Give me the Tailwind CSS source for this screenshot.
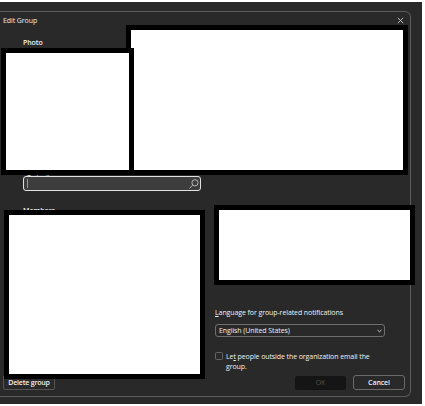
<!DOCTYPE html>
<html lang="en">
<head>
  <meta charset="UTF-8">
  <title>Edit Group</title>
  <script src="https://cdn.jsdelivr.net/npm/@tailwindcss/browser@4"></script>
</head>
<body class="bg-white font-['Open_Sans','Noto_Sans',sans-serif] text-[7px] leading-[10px] tracking-[-0.09px] text-[#f0f0f0]">

<div class="relative w-[425px] h-[406px] pt-[2px] overflow-hidden">
  <div class="w-[422px] h-[402px] bg-[#292929] pt-[9px]">

    <!-- Dialog -->
    <div class="w-[411px] h-[386px] border-t border-r border-b border-[#5c5c5c] rounded-r-[6px] flex flex-col">

      <!-- Title bar -->
      <header class="flex justify-between items-start h-[26px] pt-[4px] pl-[3px] pr-[6px]">
        <h1>Edit Group</h1>
        <button class="mt-[1px]" aria-label="Close">
          <svg width="7" height="7" viewBox="0 0 7 7" fill="none" stroke="#d0d0d0" stroke-width="0.9"><path d="M.8.8l5.4 5.4M6.2.8L.8 6.2"/></svg>
        </button>
      </header>

      <main class="flex h-[337px]">
        <!-- Left column -->
        <section class="w-[215px] pl-[23px]">
          <h2 class="font-semibold">Photo</h2>
          <label class="block mt-[125px] h-[3px] pl-[4px] font-medium">To invite</label>
          <div class="relative w-[178px] h-[15px] bg-[#3d3d3d] border-[1.5px] border-[#e2e2e2] rounded-[3px] flex items-center justify-between pl-[3px] pr-[1px]">
            <span class="w-px h-[9px] bg-[#989898]"></span>
            <svg width="10" height="10" viewBox="0 0 10 10" fill="none" stroke="#c0c0c0" stroke-width="0.9"><circle cx="6" cy="3.8" r="3.1"/><path d="M3.8 6L.4 9.4"/></svg>
          </div>
          <h2 class="mt-[15px] font-semibold tracking-normal">Members</h2>
        </section>

        <!-- Right column -->
        <section class="w-[190px] pt-[270px]">
          <label class="block"><u>L</u>anguage for group-related notifications</label>
          <div class="mt-[6px] w-[170px] h-[13px] border border-[#6e6e6e] rounded-[3px] flex items-center justify-between pl-[3px] pr-[2px]">
            <span>English (United States)</span>
            <svg width="5" height="4" viewBox="0 0 5 4" fill="none" stroke="#d8d8d8" stroke-width="0.9"><path d="M.5 1l2 1.8L4.5 1"/></svg>
          </div>
          <div class="flex gap-[3px] mt-[15px]">
            <span class="w-[8px] h-[8px] border border-[#666] rounded-[1.5px]"></span>
            <p class="w-[150px]">Le<u>t</u> people outside the organization email the group.</p>
          </div>
        </section>
      </main>

      <!-- Buttons -->
      <footer class="flex items-center h-[15px] pl-[3px] font-medium">
        <button class="w-[52px] h-[15px] pt-px border border-[#555] rounded-[2px] font-semibold tracking-[-0.2px]">Delete <u>g</u>roup</button>
        <button class="w-[51px] h-[14px] pt-px ml-auto bg-[#151515] text-[#505050] rounded-[2px] font-normal">OK</button>
        <button class="w-[52px] h-[15px] pt-px ml-[7px] mr-[5px] border border-[#6a6a6a] rounded-[3px] font-semibold">Cancel</button>
      </footer>
    </div>
  </div>

  <!-- Blank panels covering the form -->
  <div class="absolute left-[126px] top-[25px] w-[282px] h-[150px] bg-white border-[5px] border-black"></div>
  <div class="absolute left-[1px] top-[48px] w-[133px] h-[127px] bg-white border-[5px] border-black"></div>
  <div class="absolute left-[4px] top-[210px] w-[201px] h-[169px] bg-white border-[5px] border-black"></div>
  <div class="absolute left-[214px] top-[205px] w-[201px] h-[80px] bg-white border-[5px] border-black"></div>
</div>

</body>
</html>
